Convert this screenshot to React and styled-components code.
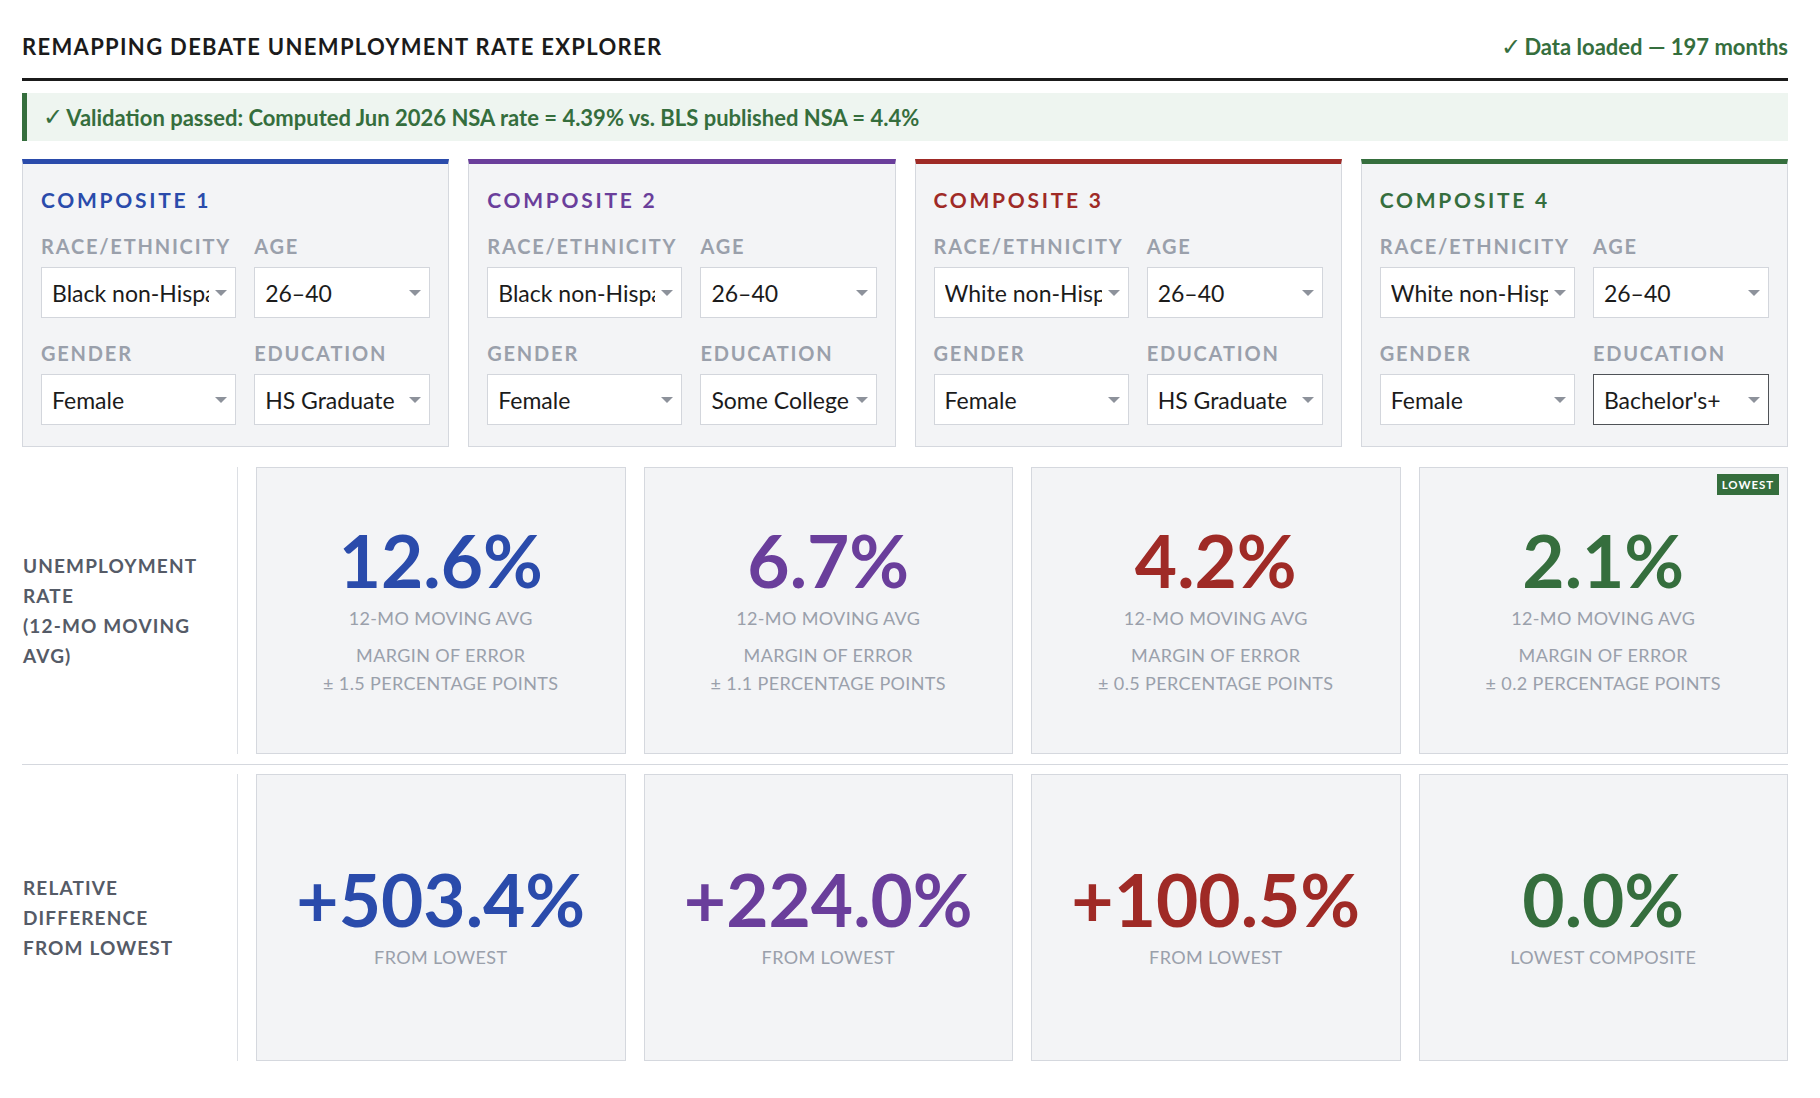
import React from 'react';
import styled, { createGlobalStyle } from 'styled-components';

const GlobalStyle = createGlobalStyle`
  body {
    margin: 0;
    background: #ffffff;
    font-family: Lato, "Noto Sans", "DejaVu Sans", sans-serif;
    color: #1b1b1b;
  }
`;

const composites = [
  {
    id: 1,
    color: '#2a4bab',
    race: 'Black non-Hispanic',
    age: '26–40',
    gender: 'Female',
    education: 'HS Graduate',
    rate: '12.6%',
    moe: '1.5',
    relative: '+503.4%',
    relativeNote: 'FROM LOWEST',
  },
  {
    id: 2,
    color: '#6a3e9b',
    race: 'Black non-Hispanic',
    age: '26–40',
    gender: 'Female',
    education: 'Some College',
    rate: '6.7%',
    moe: '1.1',
    relative: '+224.0%',
    relativeNote: 'FROM LOWEST',
  },
  {
    id: 3,
    color: '#9f2a26',
    race: 'White non-Hispanic',
    age: '26–40',
    gender: 'Female',
    education: 'HS Graduate',
    rate: '4.2%',
    moe: '0.5',
    relative: '+100.5%',
    relativeNote: 'FROM LOWEST',
  },
  {
    id: 4,
    color: '#356e3d',
    race: 'White non-Hispanic',
    age: '26–40',
    gender: 'Female',
    education: "Bachelor's+",
    rate: '2.1%',
    moe: '0.2',
    relative: '0.0%',
    relativeNote: 'LOWEST COMPOSITE',
    lowest: true,
    focused: 'education',
  },
];

const options = {
  race: ['All', 'White non-Hispanic', 'Black non-Hispanic', 'Hispanic', 'Asian'],
  age: ['16–25', '26–40', '41–55', '56+'],
  gender: ['All', 'Female', 'Male'],
  education: ['Less than HS', 'HS Graduate', 'Some College', "Bachelor's+"],
};

const fields = [
  { key: 'race', label: 'Race/Ethnicity' },
  { key: 'age', label: 'Age' },
  { key: 'gender', label: 'Gender' },
  { key: 'education', label: 'Education' },
];

export default function App() {
  return (
    <>
      <GlobalStyle />
      <Page>
        <Header>
          <Title>Remapping Debate Unemployment Rate Explorer</Title>
          <Status>
            <Check>✓</Check>Data loaded — 197 months
          </Status>
        </Header>

        <Banner>
          <Check>✓</Check>Validation passed: Computed Jun 2026 NSA rate = 4.39% vs. BLS published NSA = 4.4%
        </Banner>

        <CardRow>
          {composites.map((c) => (
            <Card key={c.id} $accent={c.color}>
              <CardTitle $accent={c.color}>Composite {c.id}</CardTitle>
              <FieldGrid>
                {fields.map((f) => (
                  <Field key={f.key}>
                    <FieldLabel>{f.label}</FieldLabel>
                    <SelectWrap>
                      <Select defaultValue={c[f.key]} $focused={c.focused === f.key}>
                        {options[f.key].map((o) => (
                          <option key={o} value={o}>{o}</option>
                        ))}
                      </Select>
                      <Arrow />
                    </SelectWrap>
                  </Field>
                ))}
              </FieldGrid>
            </Card>
          ))}
        </CardRow>

        <Metrics>
          <MetricRow>
            <RowLabel>
              Unemployment Rate
              <br />
              (12-Mo Moving Avg)
            </RowLabel>
            {composites.map((c) => (
              <MetricCard key={c.id}>
                {c.lowest && <Badge>Lowest</Badge>}
                <BigNumber $accent={c.color}>{c.rate}</BigNumber>
                <SubText>12-Mo Moving Avg</SubText>
                <MarginBlock>
                  <SubText>Margin of Error</SubText>
                  <SubText>± {c.moe} Percentage Points</SubText>
                </MarginBlock>
              </MetricCard>
            ))}
          </MetricRow>

          <RowDivider />

          <MetricRow>
            <RowLabel>Relative Difference From Lowest</RowLabel>
            {composites.map((c) => (
              <MetricCard key={c.id}>
                <BigNumber $accent={c.color}>{c.relative}</BigNumber>
                <SubText>{c.relativeNote}</SubText>
              </MetricCard>
            ))}
          </MetricRow>
        </Metrics>
      </Page>
    </>
  );
}

const Page = styled.div`
  padding: 33px 32px 36px 22px;
`;

const Header = styled.div`
  display: flex;
  justify-content: space-between;
  align-items: center;
  padding-bottom: 17px;
  border-bottom: 3px solid #1b1b1b;
`;

const Title = styled.h1`
  margin: 0;
  font-size: 22px;
  line-height: 28px;
  font-weight: 700;
  text-transform: uppercase;
  letter-spacing: 0.06em;
  color: #1b1b1b;
`;

const Status = styled.div`
  font-size: 22px;
  line-height: 28px;
  font-weight: 700;
  color: #356e3d;
`;

const Check = styled.span`
  font-family: "DejaVu Sans", sans-serif;
  font-size: 1.1em;
  font-weight: 700;
  margin-right: 3px;
`;

const Banner = styled.div`
  margin-top: 12px;
  height: 48px;
  display: flex;
  align-items: center;
  padding-left: 16px;
  background: #eef5f0;
  border-left: 5px solid #356e3d;
  font-size: 22px;
  font-weight: 700;
  color: #356e3d;
`;

const CardRow = styled.div`
  margin-top: 18px;
  display: grid;
  grid-template-columns: repeat(4, 1fr);
  gap: 19px;
`;

const Card = styled.div`
  background: #f3f4f6;
  border: 1px solid #d5d8de;
  border-top: 5px solid ${(p) => p.$accent};
  padding: 23px 18px 21px;
`;

const CardTitle = styled.div`
  font-size: 21px;
  line-height: 26px;
  font-weight: 700;
  letter-spacing: 0.13em;
  text-transform: uppercase;
  color: ${(p) => p.$accent};
  margin-bottom: 21px;
`;

const FieldGrid = styled.div`
  display: grid;
  grid-template-columns: 195fr 176fr;
  column-gap: 18px;
  row-gap: 23px;
`;

const Field = styled.div`
  display: flex;
  flex-direction: column;
  gap: 9px;
`;

const FieldLabel = styled.div`
  font-size: 20px;
  line-height: 24px;
  font-weight: 700;
  letter-spacing: 0.09em;
  text-transform: uppercase;
  color: #9aa0ab;
  white-space: nowrap;
`;

const SelectWrap = styled.div`
  position: relative;
`;

const Select = styled.select`
  appearance: none;
  -webkit-appearance: none;
  display: block;
  width: 100%;
  height: 51px;
  margin: 0;
  padding: 0 26px 0 10px;
  background: #ffffff;
  border: 1px solid ${(p) => (p.$focused ? '#4f5257' : '#d3d6dc')};
  border-radius: 0;
  font-family: Lato, "Noto Sans", sans-serif;
  font-size: 23px;
  color: #1b1b1b;
  outline: none;
`;

const Arrow = styled.span`
  position: absolute;
  right: 9px;
  top: 50%;
  margin-top: -3px;
  width: 0;
  height: 0;
  border-left: 6px solid transparent;
  border-right: 6px solid transparent;
  border-top: 6px solid #8d929b;
  pointer-events: none;
`;

const Metrics = styled.div`
  margin-top: 20px;
`;

const MetricRow = styled.div`
  display: grid;
  grid-template-columns: 216px repeat(4, 1fr);
  column-gap: 18px;
  height: 287px;
`;

const RowLabel = styled.div`
  display: flex;
  flex-direction: column;
  justify-content: center;
  padding-right: 26px;
  padding-left: 1px;
  border-right: 1px solid #dcdfe4;
  font-size: 19px;
  line-height: 30px;
  font-weight: 700;
  letter-spacing: 0.06em;
  text-transform: uppercase;
  color: #555b67;
`;

const MetricCard = styled.div`
  position: relative;
  display: flex;
  flex-direction: column;
  align-items: center;
  justify-content: center;
  background: #f3f4f6;
  border: 1px solid #d5d8de;
  text-align: center;
`;

const Badge = styled.div`
  position: absolute;
  top: 6px;
  right: 8px;
  padding: 0 5px;
  height: 21px;
  line-height: 21px;
  background: #356e3d;
  color: #ffffff;
  font-size: 11.5px;
  font-weight: 700;
  letter-spacing: 0.08em;
  text-transform: uppercase;
`;

const BigNumber = styled.div`
  font-size: 73px;
  line-height: 71px;
  font-weight: 700;
  color: ${(p) => p.$accent};
  margin-bottom: 8px;
`;

const SubText = styled.div`
  font-size: 18px;
  line-height: 28px;
  letter-spacing: 0.02em;
  text-transform: uppercase;
  color: #9aa0ab;
`;

const MarginBlock = styled.div`
  margin-top: 9px;
`;

const RowDivider = styled.div`
  margin: 10px 0 9px;
  border-top: 1px solid #d5d8de;
`;
